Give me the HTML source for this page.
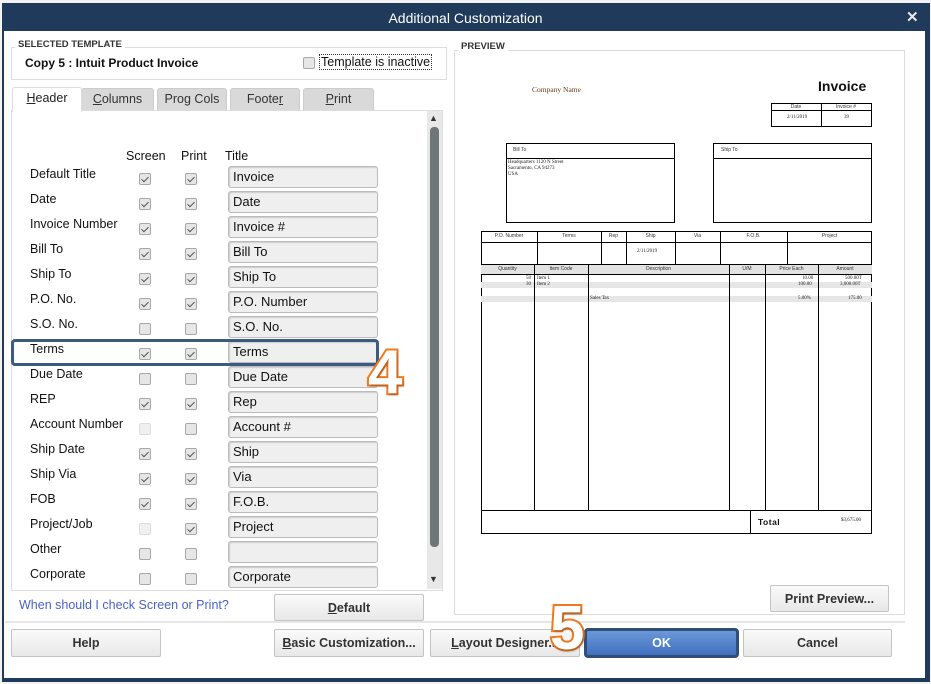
<!DOCTYPE html><html><head><style>
*{box-sizing:border-box;margin:0;padding:0}
body{width:931px;height:684px;background:#fff;position:relative;overflow:hidden;font-family:"Liberation Sans",sans-serif;font-size:12px;color:#111}
.a{position:absolute}
.cb{position:absolute;width:12px;height:12px;border:1px solid #a8a8a8;border-radius:2px;background:#e6e6e6}
.cb.d{background:#f0f0f0;border-color:#ddd}
.cb.k::after{content:"";position:absolute;left:3px;top:1px;width:3px;height:6px;border:solid #555;border-width:0 1.5px 1.5px 0;transform:rotate(45deg)}
.tf{position:absolute;left:228px;width:150px;height:22px;border:1px solid #bbb;border-radius:3px;background:#efefef;font-size:13px;padding:2px 4px;box-shadow:inset 1px 1px 1px #ccc}
.lb{position:absolute;left:30px;font-size:12.5px}
.btn{position:absolute;height:28px;border:1px solid #c4c4c4;border-radius:2px;background:linear-gradient(#fafafa,#e8e8e8);font-size:12.5px;font-weight:bold;color:#333;text-align:center;line-height:26px}
.tab{position:absolute;top:88px;height:22px;background:#d9d9d9;border:1px solid #ccc;border-bottom:none;border-radius:3px 3px 0 0;text-align:center;font-size:12.5px;line-height:21px;color:#333}
.p{position:absolute;border:1px solid #000}
.t{position:absolute;font-family:"Liberation Serif",serif;font-size:5px;color:#222}
.s{position:absolute;font-size:5px;color:#333;text-align:center}
.num{position:absolute;font-size:62px;font-weight:bold;color:#fff;-webkit-text-stroke:4px #f07a20;paint-order:stroke fill;line-height:62px;text-shadow:1px 2px 2px rgba(0,0,0,.25)}
</style></head><body>
<div class="a" style="left:0;top:0;width:931px;height:684px;background:#f3f3f3"></div>
<div class="a" style="left:2px;top:3px;width:928px;height:679px;background:#1f3a5b"></div>
<div class="a" style="left:4px;top:31px;width:921px;height:647px;background:#fff"></div>
<div class="a" style="left:0;top:4px;width:931px;height:27px;text-align:center;color:#fff;font-size:14px;line-height:28px">Additional Customization</div>
<div class="a" style="left:906px;top:8px;color:#e8e8e8;font-size:15px;font-weight:bold">✕</div>

<div class="a" style="left:11px;top:47px;width:436px;height:33px;border:1px solid #ddd"></div>
<div class="a" style="left:15px;top:39px;background:#fff;padding:0 3px;font-size:9.5px;font-weight:bold;color:#333">SELECTED TEMPLATE</div>
<div class="a" style="left:25px;top:56px;font-size:12px;font-weight:bold">Copy 5 : Intuit Product Invoice</div>
<div class="cb" style="left:303px;top:57px"></div>
<div class="a" style="left:319px;top:54px;border:1px dotted #333;padding:0 1px;font-size:12.5px">Template is inactive</div>

<div class="tab" style="left:81px;width:73px"><u>C</u>olumns</div>
<div class="tab" style="left:157px;width:70px">Pro<u>g</u> Cols</div>
<div class="tab" style="left:230px;width:70px">Foote<u>r</u></div>
<div class="tab" style="left:303px;width:71px"><u>P</u>rint</div>
<div class="a" style="left:11px;top:110px;width:432px;height:481px;border:1px solid #ddd"></div>
<div class="tab" style="left:12px;top:87px;width:70px;height:25px;background:#fff;border-color:#ddd;font-size:12.5px;color:#222"><u>H</u>eader</div>
<div class="a" style="left:427px;top:111px;width:15px;height:478px;background:#e8e8e8"></div>
<div class="a" style="left:430px;top:127px;width:9px;height:420px;background:#707575;border-radius:4px"></div>
<div class="a" style="left:429px;top:113px;font-size:9px;color:#333">▲</div>
<div class="a" style="left:429px;top:574px;font-size:9px;color:#333">▼</div>

<div class="a" style="left:126px;top:149px;font-size:12.5px">Screen</div>
<div class="a" style="left:181px;top:149px;font-size:12.5px">Print</div>
<div class="a" style="left:225px;top:149px;font-size:12.5px">Title</div>

<div class="lb" style="top:167px">Default Title</div><div class="cb k" style="left:139px;top:173px"></div><div class="cb k" style="left:185px;top:173px"></div><div class="tf" style="top:166px">Invoice</div>
<div class="lb" style="top:192px">Date</div><div class="cb k" style="left:139px;top:198px"></div><div class="cb k" style="left:185px;top:198px"></div><div class="tf" style="top:191px">Date</div>
<div class="lb" style="top:217px">Invoice Number</div><div class="cb k" style="left:139px;top:223px"></div><div class="cb k" style="left:185px;top:223px"></div><div class="tf" style="top:216px">Invoice #</div>
<div class="lb" style="top:242px">Bill To</div><div class="cb k" style="left:139px;top:248px"></div><div class="cb k" style="left:185px;top:248px"></div><div class="tf" style="top:241px">Bill To</div>
<div class="lb" style="top:267px">Ship To</div><div class="cb k" style="left:139px;top:273px"></div><div class="cb k" style="left:185px;top:273px"></div><div class="tf" style="top:266px">Ship To</div>
<div class="lb" style="top:292px">P.O. No.</div><div class="cb k" style="left:139px;top:298px"></div><div class="cb k" style="left:185px;top:298px"></div><div class="tf" style="top:291px">P.O. Number</div>
<div class="lb" style="top:317px">S.O. No.</div><div class="cb" style="left:139px;top:323px"></div><div class="cb" style="left:185px;top:323px"></div><div class="tf" style="top:316px">S.O. No.</div>
<div class="lb" style="top:342px">Terms</div><div class="cb k" style="left:139px;top:348px"></div><div class="cb k" style="left:185px;top:348px"></div><div class="tf" style="top:341px">Terms</div>
<div class="lb" style="top:367px">Due Date</div><div class="cb" style="left:139px;top:373px"></div><div class="cb" style="left:185px;top:373px"></div><div class="tf" style="top:366px">Due Date</div>
<div class="lb" style="top:392px">REP</div><div class="cb k" style="left:139px;top:398px"></div><div class="cb k" style="left:185px;top:398px"></div><div class="tf" style="top:391px">Rep</div>
<div class="lb" style="top:417px">Account Number</div><div class="cb d" style="left:139px;top:423px"></div><div class="cb" style="left:185px;top:423px"></div><div class="tf" style="top:416px">Account #</div>
<div class="lb" style="top:442px">Ship Date</div><div class="cb k" style="left:139px;top:448px"></div><div class="cb k" style="left:185px;top:448px"></div><div class="tf" style="top:441px">Ship</div>
<div class="lb" style="top:467px">Ship Via</div><div class="cb k" style="left:139px;top:473px"></div><div class="cb k" style="left:185px;top:473px"></div><div class="tf" style="top:466px">Via</div>
<div class="lb" style="top:492px">FOB</div><div class="cb k" style="left:139px;top:498px"></div><div class="cb k" style="left:185px;top:498px"></div><div class="tf" style="top:491px">F.O.B.</div>
<div class="lb" style="top:517px">Project/Job</div><div class="cb d" style="left:139px;top:523px"></div><div class="cb k" style="left:185px;top:523px"></div><div class="tf" style="top:516px">Project</div>
<div class="lb" style="top:542px">Other</div><div class="cb" style="left:139px;top:548px"></div><div class="cb" style="left:185px;top:548px"></div><div class="tf" style="top:541px"></div>
<div class="lb" style="top:567px">Corporate</div><div class="cb" style="left:139px;top:573px"></div><div class="cb" style="left:185px;top:573px"></div><div class="tf" style="top:566px">Corporate</div>

<div class="a" style="left:11px;top:339px;width:368px;height:27px;border:3px solid #3b5b82;border-radius:4px"></div>
<div class="num" style="left:368px;top:342px">4</div>

<div class="a" style="left:19px;top:598px;font-size:12.5px;color:#4a62c8">When should I check Screen or Print?</div>
<div class="btn" style="left:274px;top:594px;width:150px;height:27px"><u>D</u>efault</div>

<div class="a" style="left:454px;top:50px;width:451px;height:565px;border:1px solid #ddd"></div>
<div class="a" style="left:458px;top:41px;background:#fff;padding:0 3px;font-size:9.5px;font-weight:bold;color:#333">PREVIEW</div>
<div class="a" style="left:532px;top:85px;font-family:'Liberation Serif',serif;font-size:7.5px;color:#6b3a1a">Company Name</div>
<div class="a" style="left:818px;top:78px;font-size:14px;font-weight:bold">Invoice</div>
<div class="p" style="left:771px;top:103px;width:101px;height:24px"></div>
<div class="a" style="left:771px;top:110px;width:101px;border-top:1px solid #000"></div>
<div class="a" style="left:821px;top:103px;height:24px;border-left:1px solid #000"></div>
<div class="s" style="left:771px;top:104px;width:50px">Date</div><div class="s" style="left:821px;top:104px;width:50px">Invoice #</div>
<div class="t" style="left:787px;top:115px">2/11/2019</div><div class="t" style="left:844px;top:115px">39</div>
<div class="p" style="left:506px;top:143px;width:169px;height:80px"></div><div class="a" style="left:506px;top:158px;width:169px;border-top:1px solid #000"></div>
<div class="s" style="left:513px;top:147px">Bill To</div>
<div class="t" style="left:508px;top:160px;line-height:6px">Headquarters 1120 N Street<br>Sacramento, CA 94273<br>USA</div>
<div class="p" style="left:713px;top:143px;width:159px;height:80px"></div><div class="a" style="left:713px;top:158px;width:159px;border-top:1px solid #000"></div>
<div class="s" style="left:721px;top:147px">Ship To</div>
<div class="p" style="left:481px;top:231px;width:391px;height:303px"></div>
<div class="a" style="left:481px;top:242px;width:391px;border-top:1px solid #000"></div>
<div class="a" style="left:481px;top:264px;width:391px;height:11px;background:#e2e2e2;border-top:1px solid #000;border-bottom:1px solid #000"></div>
<div class="a" style="left:481px;top:282px;width:391px;height:6px;background:#e6e6e6"></div>
<div class="a" style="left:481px;top:296px;width:391px;height:6px;background:#e6e6e6"></div>
<div class="a" style="left:537px;top:231px;height:33px;border-left:1px solid #000"></div>
<div class="a" style="left:601px;top:231px;height:33px;border-left:1px solid #000"></div>
<div class="a" style="left:626px;top:231px;height:33px;border-left:1px solid #000"></div>
<div class="a" style="left:675px;top:231px;height:33px;border-left:1px solid #000"></div>
<div class="a" style="left:720px;top:231px;height:33px;border-left:1px solid #000"></div>
<div class="a" style="left:787px;top:231px;height:33px;border-left:1px solid #000"></div>
<div class="s" style="left:481px;top:233px;width:56px">P.O. Number</div><div class="s" style="left:537px;top:233px;width:64px">Terms</div><div class="s" style="left:601px;top:233px;width:25px">Rep</div><div class="s" style="left:626px;top:233px;width:49px">Ship</div><div class="s" style="left:675px;top:233px;width:45px">Via</div><div class="s" style="left:720px;top:233px;width:67px">F.O.B.</div><div class="s" style="left:787px;top:233px;width:85px">Project</div>
<div class="t" style="left:637px;top:249px">2/11/2019</div>
<div class="a" style="left:534px;top:264px;height:247px;border-left:1px solid #000"></div>
<div class="a" style="left:588px;top:264px;height:247px;border-left:1px solid #000"></div>
<div class="a" style="left:729px;top:264px;height:247px;border-left:1px solid #000"></div>
<div class="a" style="left:765px;top:264px;height:247px;border-left:1px solid #000"></div>
<div class="a" style="left:818px;top:264px;height:247px;border-left:1px solid #000"></div>
<div class="s" style="left:481px;top:266px;width:53px">Quantity</div><div class="s" style="left:534px;top:266px;width:54px">Item Code</div><div class="s" style="left:588px;top:266px;width:141px">Description</div><div class="s" style="left:729px;top:266px;width:36px">U/M</div><div class="s" style="left:765px;top:266px;width:53px">Price Each</div><div class="s" style="left:818px;top:266px;width:54px">Amount</div>
<div class="t" style="left:526px;top:276px">50</div><div class="t" style="left:537px;top:276px">Item 1</div><div class="t" style="left:802px;top:276px">10.00</div><div class="t" style="left:845px;top:276px">500.00T</div>
<div class="t" style="left:526px;top:282px">30</div><div class="t" style="left:537px;top:282px">Item 2</div><div class="t" style="left:798px;top:282px">100.00</div><div class="t" style="left:840px;top:282px">3,000.00T</div>
<div class="t" style="left:590px;top:296px">Sales Tax</div><div class="t" style="left:798px;top:296px">5.00%</div><div class="t" style="left:848px;top:296px">175.00</div>
<div class="a" style="left:481px;top:510px;width:391px;border-top:1px solid #000"></div>
<div class="a" style="left:750px;top:510px;height:24px;border-left:1px solid #000"></div>
<div class="a" style="left:758px;top:517px;font-size:8.5px;font-weight:bold;letter-spacing:.5px">Total</div>
<div class="t" style="left:841px;top:518px">$3,675.00</div>

<div class="btn" style="left:770px;top:585px;width:119px;height:27px">Print Preview...</div>

<div class="a" style="left:5px;top:621px;width:900px;border-top:2px solid #e6e6e6"></div>
<div class="btn" style="left:11px;top:629px;width:150px">Help</div>
<div class="btn" style="left:274px;top:629px;width:150px"><u>B</u>asic Customization...</div>
<div class="btn" style="left:430px;top:629px;width:150px"><u>L</u>ayout Designer...</div>
<div class="btn" style="left:584px;top:628px;width:155px;height:30px;border:3px solid #2f4f78;border-radius:4px;background:linear-gradient(#6a98d8,#4270c0);color:#fff;line-height:24px">OK</div>
<div class="btn" style="left:743px;top:629px;width:149px">Cancel</div>
<div class="num" style="left:550px;top:598px">5</div>
</body></html>
